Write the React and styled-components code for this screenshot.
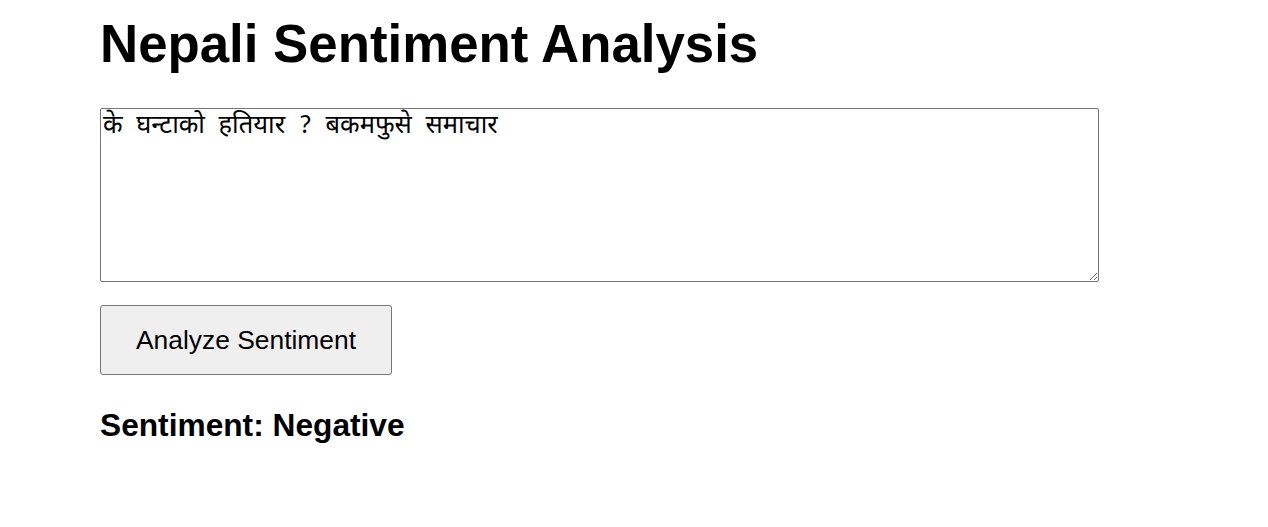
import React, { useState } from 'react';
import styled, { createGlobalStyle } from 'styled-components';

const GlobalStyle = createGlobalStyle`
  body {
    margin: 0;
    background: #fff;
    font-family: "Liberation Sans", Arial, sans-serif;
  }
`;

const Page = styled.div`
  display: flex;
  flex-direction: column;
  align-items: flex-start;
  padding: 14px 100px 0;
`;

const Title = styled.h1`
  margin: 0 0 34px;
  font-size: 52.8px;
  font-weight: bold;
  line-height: 60px;
  color: #000;
`;

const TextBox = styled.textarea`
  box-sizing: border-box;
  width: 999px;
  height: 174px;
  padding: 3px 2px 2px;
  margin: 0 0 23px;
  font-family: "Noto Sans Devanagari", "Lohit Devanagari", "Noto Sans", sans-serif;
  font-size: 25.5px;
  line-height: 1.2;
  word-spacing: 7px;
  border: 1px solid #767676;
  border-radius: 2px;
  color: #000;
`;

const Button = styled.button`
  box-sizing: border-box;
  width: 292px;
  height: 70px;
  font-family: "Liberation Sans", Arial, sans-serif;
  font-size: 26.4px;
  color: #000;
  background: #efefef;
  border: 1px solid #767676;
  border-radius: 3px;
  cursor: pointer;
`;

const Result = styled.h2`
  margin: 32px 0 0;
  font-size: 31.7px;
  font-weight: bold;
  line-height: 36px;
`;

export default function App() {
  const [text, setText] = useState('के घन्टाको हतियार ? बकमफुसे समाचार');
  return (
    <>
      <GlobalStyle />
      <Page>
        <Title>Nepali Sentiment Analysis</Title>
        <TextBox value={text} onChange={(e) => setText(e.target.value)} />
        <Button type="button">Analyze Sentiment</Button>
        <Result>Sentiment: Negative</Result>
      </Page>
    </>
  );
}
